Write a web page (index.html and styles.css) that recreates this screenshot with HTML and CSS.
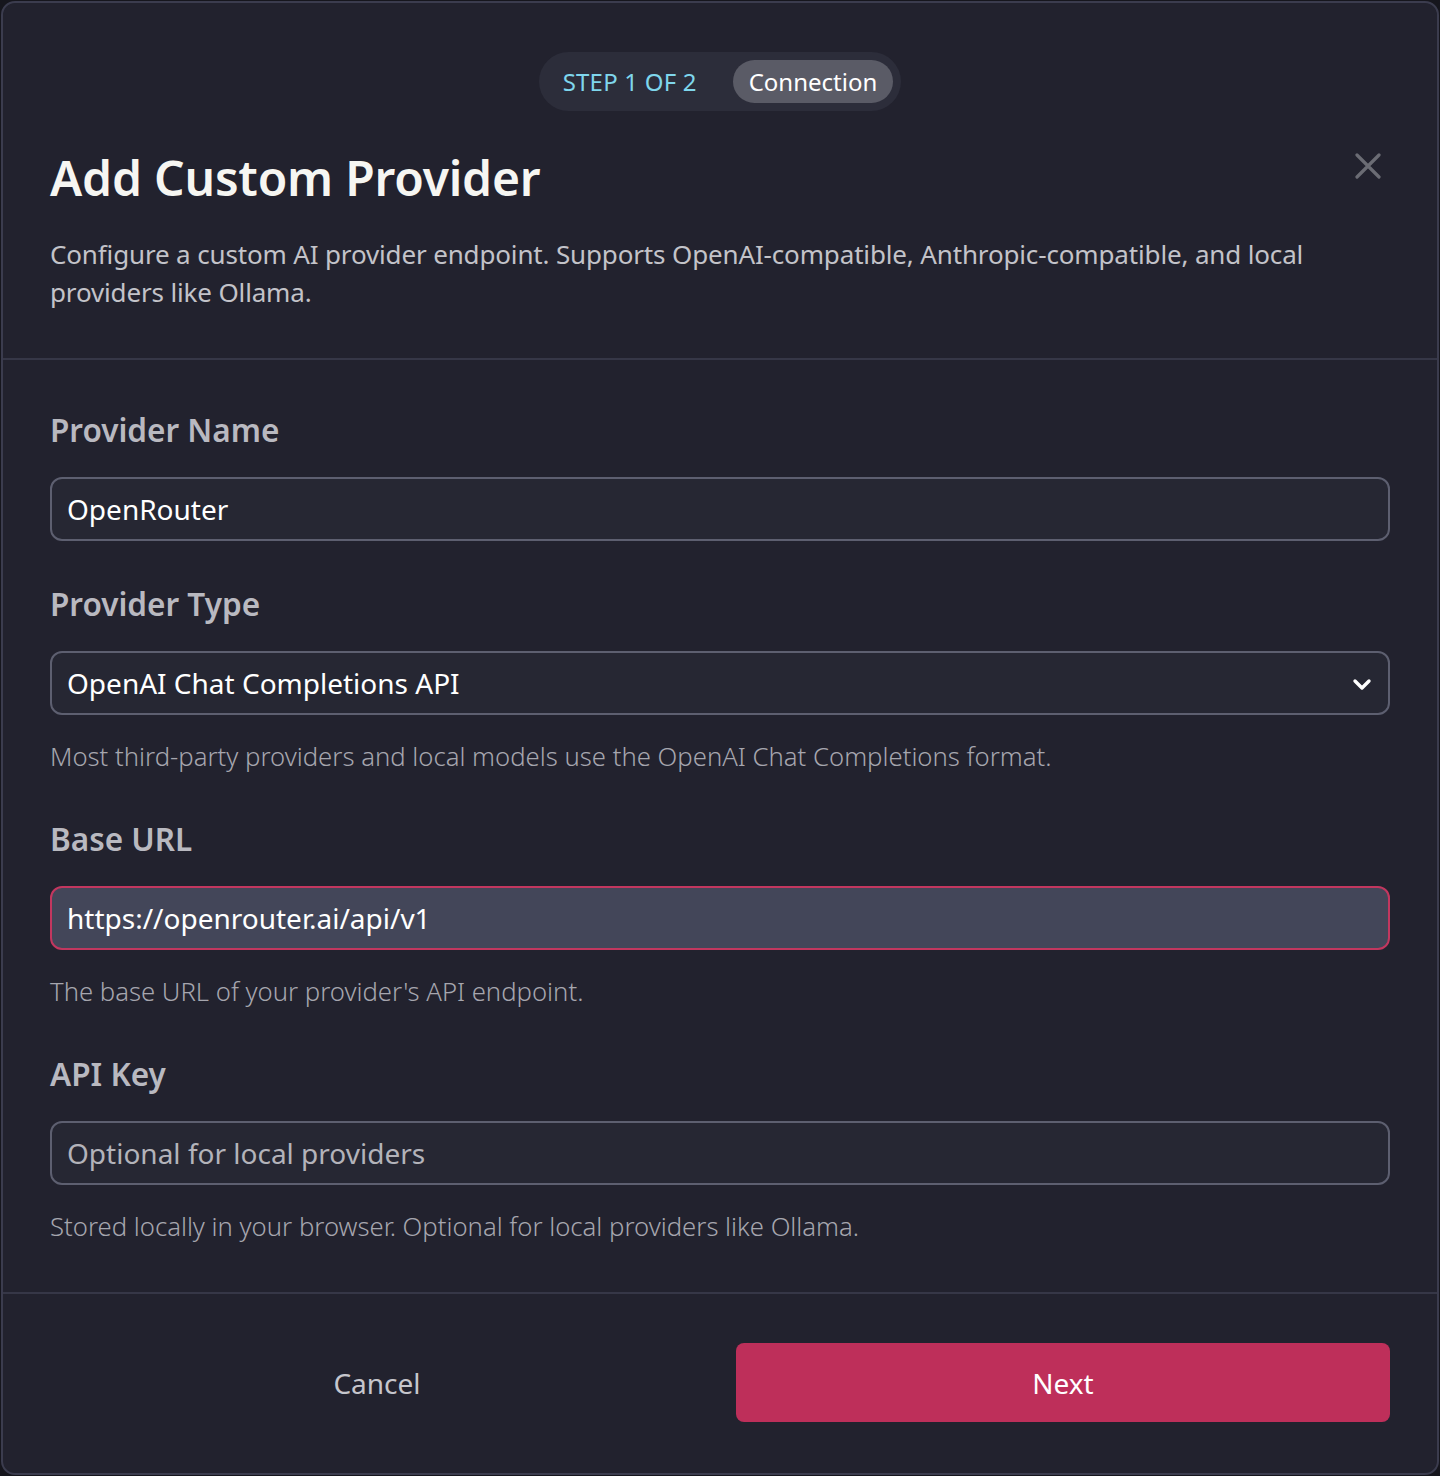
FILE: index.html
```html
<!DOCTYPE html>
<html lang="en">
<head>
    <meta charset="UTF-8">
    <meta name="viewport" content="width=device-width, initial-scale=1.0">
    <title>Add Custom Provider</title>
    <link rel="stylesheet" href="styles.css">
</head>
<body>
    <div class="modal">
        <div class="modal-header">
            <div class="stepper">
                <span class="step-count">STEP 1 OF 2</span>
                <span class="step-name">Connection</span>
            </div>
            <h1>Add Custom Provider</h1>
            <p class="intro">Configure a custom AI provider endpoint. Supports OpenAI-compatible, Anthropic-compatible, and local providers like Ollama.</p>
            <button class="close-btn" aria-label="Close">
                <svg width="26" height="26" viewBox="0 0 26 26" fill="none" stroke="currentColor" stroke-width="3.2" stroke-linecap="round">
                    <path d="M2 2L24 24M24 2L2 24"/>
                </svg>
            </button>
        </div>

        <div class="modal-body">
            <div class="field">
                <label for="name">Provider Name</label>
                <input type="text" id="name" value="OpenRouter">
            </div>
            <div class="field">
                <label for="type">Provider Type</label>
                <div class="select-wrap">
                    <select id="type">
                        <option>OpenAI Chat Completions API</option>
                        <option>Anthropic Messages API</option>
                    </select>
                    <svg class="chevron" width="20" height="14" viewBox="0 0 20 14" fill="none" stroke="currentColor" stroke-width="3.4" stroke-linecap="round" stroke-linejoin="round">
                        <path d="M3 4l7 7 7-7"/>
                    </svg>
                </div>
                <p class="hint">Most third-party providers and local models use the OpenAI Chat Completions format.</p>
            </div>
            <div class="field">
                <label for="url">Base URL</label>
                <input type="text" id="url" class="focused" value="https://openrouter.ai/api/v1">
                <p class="hint">The base URL of your provider's API endpoint.</p>
            </div>
            <div class="field">
                <label for="key">API Key</label>
                <input type="password" id="key" placeholder="Optional for local providers">
                <p class="hint">Stored locally in your browser. Optional for local providers like Ollama.</p>
            </div>
        </div>

        <div class="modal-footer">
            <button class="btn btn-ghost">Cancel</button>
            <button class="btn btn-primary">Next</button>
        </div>
    </div>
</body>
</html>
```

FILE: styles.css
```css
* {
    box-sizing: border-box;
}
body {
    margin: 0;
    background-color: #16161d;
    font-family: "Noto Sans", "Open Sans", sans-serif;
    color: #f4f4f2;
}
.modal {
    margin: 1px;
    min-height: 1474px;
    background-color: #22222e;
    border: 2px solid #3b3c4e;
    border-radius: 14px;
    overflow: hidden;
}

/* header with the step indicator */
.modal-header {
    position: relative;
    padding: 49px 47px 47px;
    border-bottom: 2px solid #363747;
}
.stepper {
    display: flex;
    align-items: center;
    gap: 36px;
    width: max-content;
    margin: 0 auto;
    padding: 8px 8px 8px 24px;
    background-color: #2c2d3a;
    border-radius: 30px;
}
.step-count {
    color: #7fd6ec;
    font-size: 24px;
    letter-spacing: 0.2px;
}
.step-name {
    padding: 5px 16px;
    background-color: #5a5b66;
    border-radius: 22px;
    font-size: 24px;
    line-height: 33px;
    color: #ffffff;
}
h1 {
    margin: 38px 0 0;
    font-size: 48px;
    font-weight: 600;
    line-height: 58px;
    color: #f6f6f2;
    letter-spacing: -0.2px;
}
.intro {
    margin: 28px 0 0;
    font-size: 26px;
    line-height: 38px;
    letter-spacing: -0.15px;
    color: #c3c3c9;
}
.close-btn {
    position: absolute;
    top: 150px;
    right: 56px;
    padding: 0;
    border: none;
    background: none;
    color: #6b6c74;
    cursor: pointer;
}

/* form fields */
.modal-body {
    padding: 50px 47px 46px;
    border-bottom: 2px solid #363747;
}
.field + .field {
    margin-top: 43px;
}
label {
    display: block;
    margin-bottom: 27px;
    font-size: 31.5px;
    font-weight: 600;
    line-height: 40px;
    color: #b9b9c0;
}
input,
select {
    display: block;
    width: 100%;
    height: 64px;
    padding: 0 15px;
    background-color: #262733;
    border: 2px solid #5d5f70;
    border-radius: 12px;
    font-family: inherit;
    font-size: 28px;
    color: #ffffff;
    outline: none;
}
input::placeholder {
    color: #b3b3ba;
}
input.focused {
    background-color: #434659;
    border-color: #c2375f;
}
.select-wrap {
    position: relative;
}
select {
    appearance: none;
    -webkit-appearance: none;
}
.chevron {
    position: absolute;
    top: 26px;
    right: 18px;
    color: #ffffff;
    pointer-events: none;
}
.hint {
    margin: 23px 0 0;
    font-size: 25.7px;
    font-weight: 350;
    line-height: 38px;
    color: #a6a6ae;
}

/* footer buttons */
.modal-footer {
    display: grid;
    grid-template-columns: 1fr 1fr;
    gap: 32px;
    padding: 49px 47px 50px;
}
.btn {
    height: 79px;
    border: none;
    border-radius: 8px;
    font-family: inherit;
    font-size: 28px;
    cursor: pointer;
}
.btn-ghost {
    background: none;
    color: #c6c6cc;
}
.btn-primary {
    background-color: #be2f5a;
    color: #ffffff;
}
```
